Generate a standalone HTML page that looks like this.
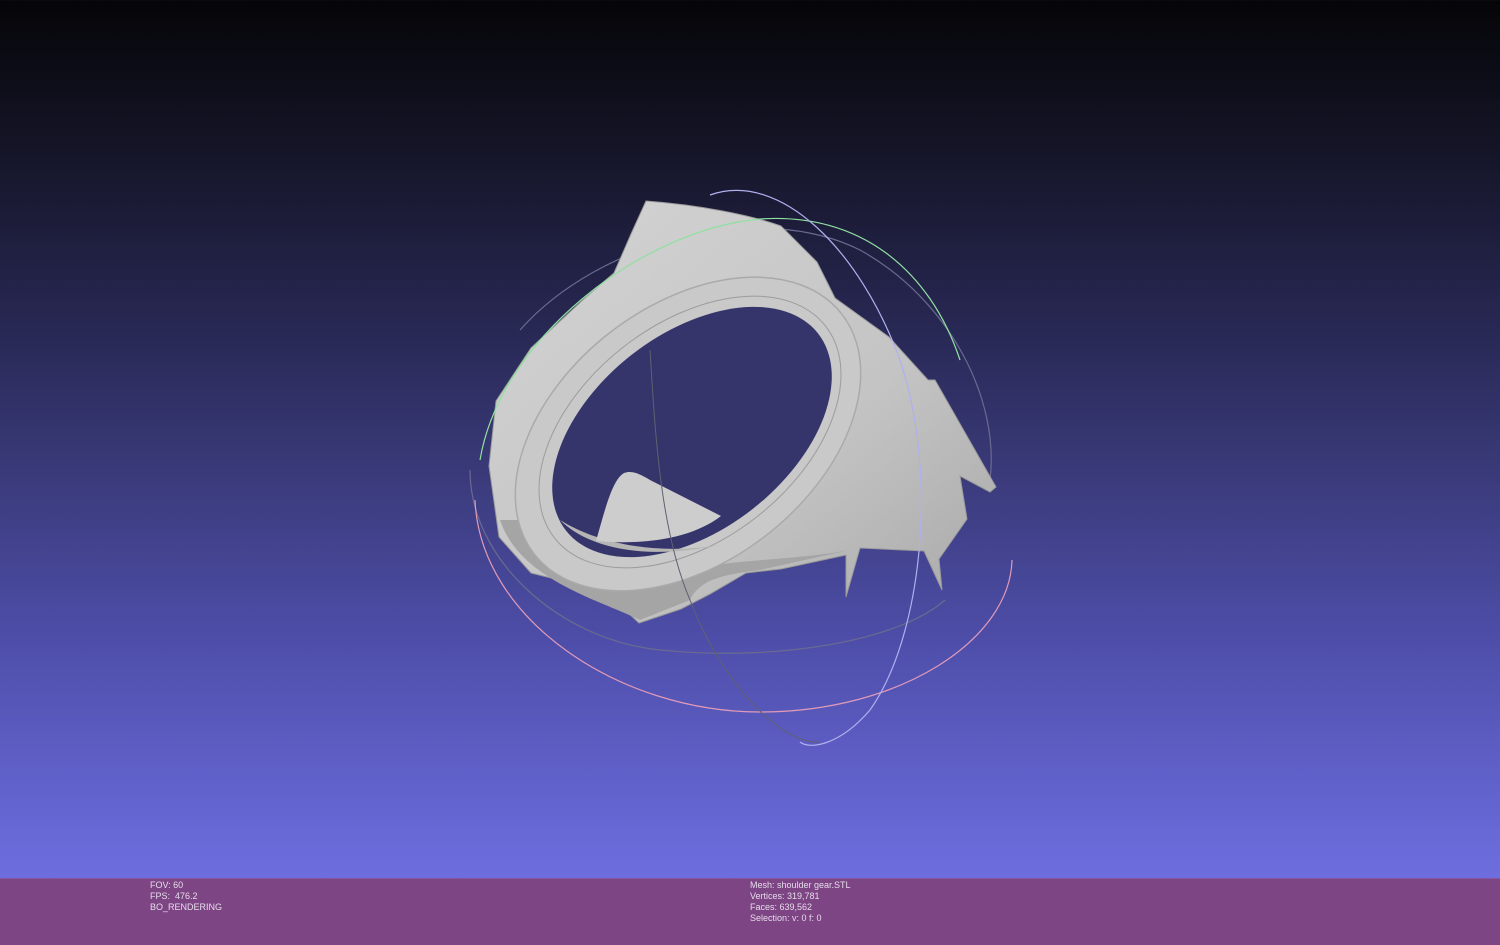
<!DOCTYPE html>
<html><head><meta charset="utf-8"><style>
html,body{margin:0;padding:0;width:1500px;height:945px;overflow:hidden}
body{position:relative;background:linear-gradient(to bottom,#050508 0%,#151528 16%,#262650 33%,#3a3a7a 50%,#4e4eaa 68%,#6464d0 85%,#7676ec 100%);height:878px}
#bar{position:absolute;left:0;top:878px;width:1500px;height:67px;background:#7d4584;border-top:1px solid #8a55a0}
.t{position:absolute;color:#e6dcea;font:9px/11px "Liberation Sans",sans-serif}
svg{position:absolute;left:0;top:0}
</style></head><body>
<svg width="1500" height="878" viewBox="0 0 1500 878">
<defs>
<linearGradient id="g" x1="0" y1="0" x2="1" y2="1">
<stop offset="0" stop-color="#d4d4d4"/><stop offset="0.6" stop-color="#c4c4c4"/><stop offset="1" stop-color="#a8a8a8"/>
</linearGradient>
</defs>
<path d="M470,470 C470,560 560,640 660,650 C780,662 900,640 945,600" fill="none" stroke="#6a6a90" stroke-width="1.2"/>
<path d="M520,330 C600,240 760,200 860,250 C950,300 1000,400 990,480" fill="none" stroke="#6a6a90" stroke-width="1.2"/>
<path d="M646,201 C700,205 750,215 781,226 L817,262 L835,298 L889,337 L928,380 L935,380 L996,487 L990,492 L960,476 L967,519 L939,559 L942,590 L924,551 L860,548 L846,597 L846,555 L781,569 L746,573 L710,594 L681,609 L639,623 L624,609 L617,594 L531,573 L499,537 L489,466 L496,401 L531,348 L585,298 L614,273 L631,234 Z" fill="url(#g)" stroke="#9a9a9a" stroke-width="1"/>
<path d="M500,520 C520,580 600,600 640,620 L690,600 C700,580 720,575 760,570 L850,550 C800,560 720,560 690,570 C640,585 560,560 520,520 Z" fill="#a5a5a5"/>
<ellipse cx="688" cy="434" rx="195" ry="128" transform="rotate(-38 688 434)" fill="#c9c9c9" stroke="#aaa" stroke-width="1.5"/>
<ellipse cx="690" cy="432" rx="172" ry="108" transform="rotate(-38 690 432)" fill="none" stroke="#9c9c9c" stroke-width="1"/>
<ellipse cx="692" cy="432" rx="160" ry="98" transform="rotate(-38 692 432)" fill="#35356c"/>
<path d="M560,520 C600,545 660,555 720,545 C650,560 590,550 560,520 Z" fill="#b5b5b5"/>
<path d="M596,541 C605,510 612,480 624,473 C632,470 640,474 650,480 L721,516 C690,540 640,545 596,541 Z" fill="#cdcdcd"/>
<path d="M480,460 C500,340 640,230 760,219 C860,212 930,270 960,360" fill="none" stroke="#90e0a0" stroke-width="1.2"/>
<path d="M475,500 C480,620 620,712 760,712 C900,712 1010,640 1012,560" fill="none" stroke="#e09ab8" stroke-width="1.2"/>
<path d="M710,195 C780,170 860,250 900,360 C940,480 920,640 870,710 C840,745 810,750 800,742" fill="none" stroke="#b0b0f0" stroke-width="1.2"/>
<path d="M650,350 C655,430 660,530 690,600 C720,680 780,745 820,742" fill="none" stroke="#606070" stroke-width="1"/>
</svg>
<div id="bar"></div>
<div class="t" style="left:150px;top:880px">FOV: 60<br>FPS: &nbsp;476.2<br>BO_RENDERING</div>
<div class="t" style="left:750px;top:880px">Mesh: shoulder gear.STL<br>Vertices: 319,781<br>Faces: 639,562<br>Selection: v: 0 f: 0</div>
</body></html>
